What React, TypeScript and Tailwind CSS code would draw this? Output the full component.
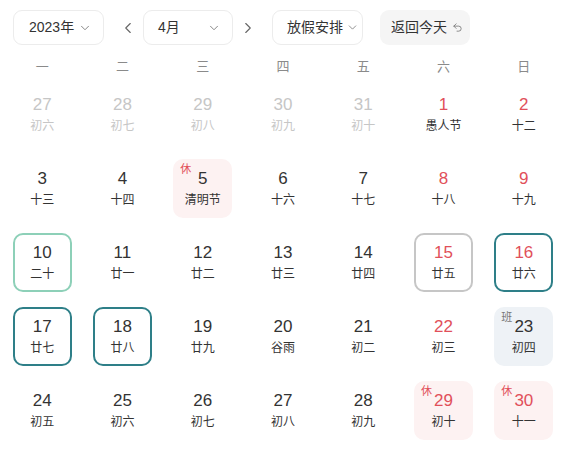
import { ChevronDown, ChevronLeft, ChevronRight, Undo2 } from "lucide-react";

type Day = {
  n: number;
  lunar: string;
  dim?: boolean;
  red?: boolean;
  tag?: "休" | "班";
  ring?: "green" | "gray" | "teal";
};

const weekdays = ["一", "二", "三", "四", "五", "六", "日"];

const days: Day[] = [
  { n: 27, lunar: "初六", dim: true },
  { n: 28, lunar: "初七", dim: true },
  { n: 29, lunar: "初八", dim: true },
  { n: 30, lunar: "初九", dim: true },
  { n: 31, lunar: "初十", dim: true },
  { n: 1, lunar: "愚人节", red: true },
  { n: 2, lunar: "十二", red: true },
  { n: 3, lunar: "十三" },
  { n: 4, lunar: "十四" },
  { n: 5, lunar: "清明节", tag: "休" },
  { n: 6, lunar: "十六" },
  { n: 7, lunar: "十七" },
  { n: 8, lunar: "十八", red: true },
  { n: 9, lunar: "十九", red: true },
  { n: 10, lunar: "二十", ring: "green" },
  { n: 11, lunar: "廿一" },
  { n: 12, lunar: "廿二" },
  { n: 13, lunar: "廿三" },
  { n: 14, lunar: "廿四" },
  { n: 15, lunar: "廿五", red: true, ring: "gray" },
  { n: 16, lunar: "廿六", red: true, ring: "teal" },
  { n: 17, lunar: "廿七", ring: "teal" },
  { n: 18, lunar: "廿八", ring: "teal" },
  { n: 19, lunar: "廿九" },
  { n: 20, lunar: "谷雨" },
  { n: 21, lunar: "初二" },
  { n: 22, lunar: "初三", red: true },
  { n: 23, lunar: "初四", tag: "班" },
  { n: 24, lunar: "初五" },
  { n: 25, lunar: "初六" },
  { n: 26, lunar: "初七" },
  { n: 27, lunar: "初八" },
  { n: 28, lunar: "初九" },
  { n: 29, lunar: "初十", red: true, tag: "休" },
  { n: 30, lunar: "十一", red: true, tag: "休" },
];

function Cell({ d }: { d: Day }) {
  let box = "border-2 border-transparent";
  if (d.ring === "green") box = "border-2 border-[#8dd0b8]";
  if (d.ring === "gray") box = "border-2 border-[#c6c6c6]";
  if (d.ring === "teal") box = "border-2 border-[#2e7f88]";
  let bg = "";
  if (d.tag === "休") bg = "bg-[#fdf2f2]";
  if (d.tag === "班") bg = "bg-[#eef2f6]";

  const numColor = d.dim ? "text-[#c6c6c6]" : d.red ? "text-[#e1505a]" : "text-[#333]";
  const lunarColor = d.dim ? "text-[#c6c6c6]" : "text-[#333]";

  return (
    <div className="flex justify-center">
      <div className={`relative w-[59px] h-[59px] rounded-[10px] ${box} ${bg} flex flex-col items-center pt-[8px]`}>
        {d.tag && (
          <span
            className={`absolute left-[5px] top-[1px] text-[11px] leading-[14px] ${
              d.tag === "休" ? "text-[#e1505a]" : "text-[#777]"
            }`}
          >
            {d.tag}
          </span>
        )}
        <span className={`text-[17px] leading-[20px] ${numColor}`}>{d.n}</span>
        <span className={`mt-[3px] text-[12px] leading-[16px] ${lunarColor}`}>{d.lunar}</span>
      </div>
    </div>
  );
}

export default function App() {
  return (
    <div
      className="w-[566px] h-[452px] bg-white overflow-hidden"
      style={{ fontFamily: '"Liberation Sans", "Noto Sans CJK SC", sans-serif' }}
    >
      {/* Header */}
      <div className="flex items-center pl-[13px] pt-[10px]">
        <div className="w-[91px] h-[35px] rounded-[9px] border border-[#ececec] flex items-center justify-between pl-[15px] pr-[11px] text-[14px] text-[#333]">
          <span>2023年</span>
          <ChevronDown size={14} strokeWidth={1.5} className="text-[#777]" />
        </div>
        <ChevronLeft size={18} strokeWidth={1.5} className="ml-[15px] text-[#666]" />
        <div className="ml-[6px] w-[90px] h-[35px] rounded-[9px] border border-[#ececec] flex items-center justify-between pl-[14px] pr-[11px] text-[14px] text-[#333]">
          <span>4月</span>
          <ChevronDown size={14} strokeWidth={1.5} className="text-[#777]" />
        </div>
        <ChevronRight size={18} strokeWidth={1.5} className="ml-[6px] text-[#666]" />
        <div className="ml-[15px] w-[91px] h-[35px] rounded-[9px] border border-[#ececec] flex items-center pl-[14px] text-[14px] text-[#333]">
          <span>放假安排</span>
          <ChevronDown size={13} strokeWidth={1.5} className="ml-[3px] text-[#777]" />
        </div>
        <div className="ml-[17px] w-[90px] h-[35px] rounded-[9px] bg-[#f5f5f5] flex items-center pl-[11px] text-[14px] text-[#333]">
          <span>返回今天</span>
          <Undo2 size={11} strokeWidth={1.6} className="ml-[5px] text-[#666]" />
        </div>
      </div>

      {/* Weekdays */}
      <div className="grid grid-cols-7 px-[2px] mt-[10px] h-[24px] items-center">
        {weekdays.map((w) => (
          <div key={w} className="text-center text-[13px] text-[#8a8a8a]">
            {w}
          </div>
        ))}
      </div>

      {/* Days */}
      <div className="grid grid-cols-7 px-[2px] mt-[6px] gap-y-[15px]">
        {days.map((d, i) => (
          <Cell key={i} d={d} />
        ))}
      </div>
    </div>
  );
}
